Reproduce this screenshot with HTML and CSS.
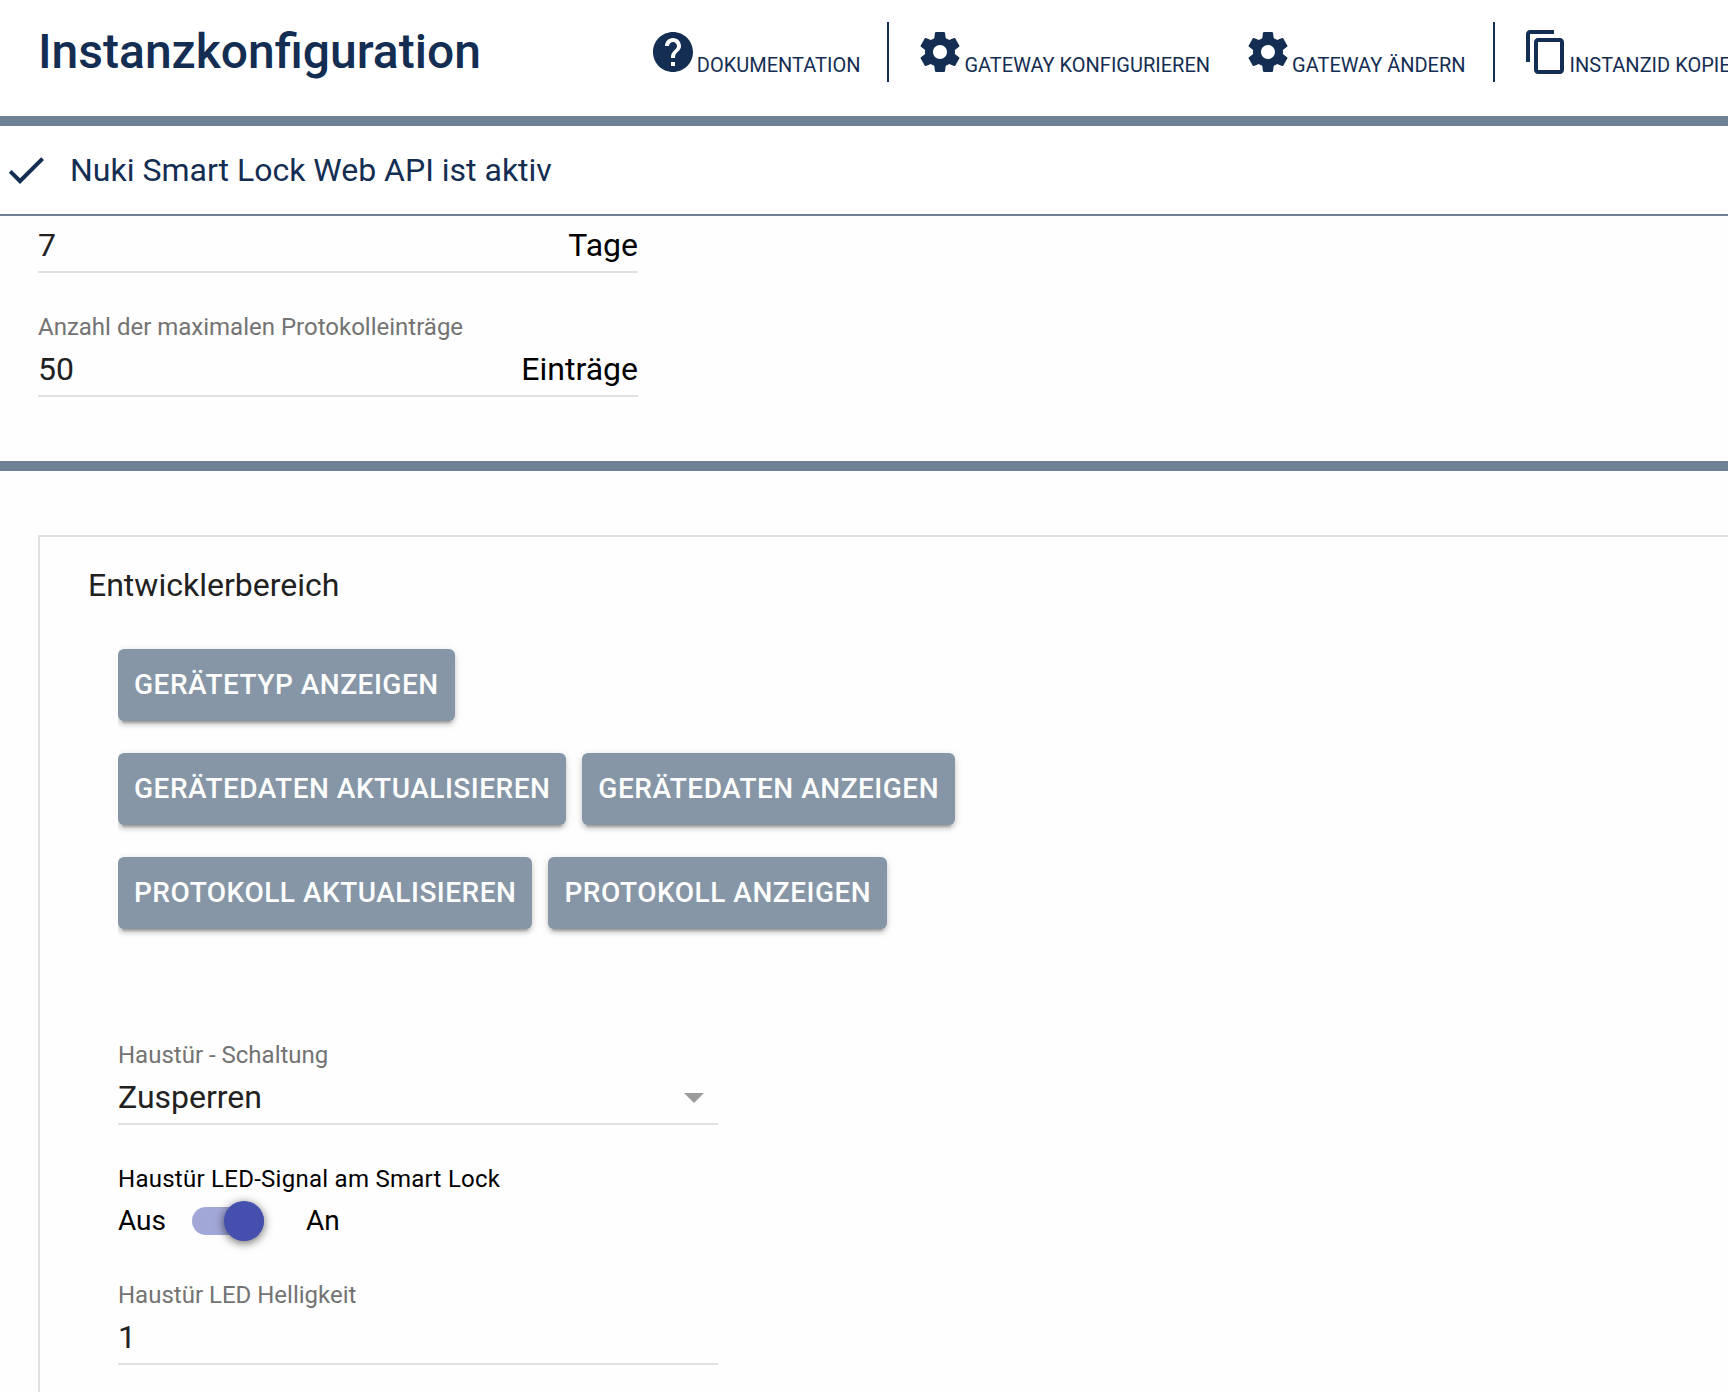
FILE: index.html
```html
<!DOCTYPE html>
<html lang="de">
<head>
  <meta charset="UTF-8">
  <meta name="viewport" content="width=device-width, initial-scale=1.0">
  <title>Instanzkonfiguration</title>
  <link rel="stylesheet" href="styles.css">
</head>
<body>
  <svg class="sprite" aria-hidden="true">
    <symbol id="icon-help" viewBox="0 0 24 24">
      <path d="M12 2C6.48 2 2 6.48 2 12s4.480 10 10 10 10-4.480 10-10S17.520 2 12 2zm1 17h-2v-2h2v2zm2.070-7.750l-.9.920C13.450 12.900 13 13.500 13 15h-2v-.5c0-1.100.450-2.100 1.170-2.830l1.240-1.260c.370-.360.590-.860.590-1.410 0-1.100-.9-2-2-2s-2 .9-2 2H8c0-2.210 1.790-4 4-4s4 1.790 4 4c0 .880-.360 1.680-.930 2.250z"/>
    </symbol>
    <symbol id="icon-settings" viewBox="0 0 24 24">
      <path d="M19.430 12.980c.040-.320.070-.640.070-.980s-.030-.660-.070-.980l2.110-1.650c.190-.150.240-.420.120-.640l-2-3.460c-.120-.220-.390-.3-.610-.220l-2.490 1c-.520-.4-1.080-.730-1.690-.980l-.380-2.650C14.460 2.180 14.250 2 14 2h-4c-.250 0-.460.180-.490.420l-.380 2.650c-.610.250-1.170.590-1.690.980l-2.490-1c-.230-.090-.490 0-.610.220l-2 3.460c-.130.220-.070.490.120.640l2.110 1.650c-.040.320-.070.650-.070.980s.030.660.070.980l-2.110 1.650c-.190.150-.240.420-.120.640l2 3.460c.120.220.390.3.610.220l2.490-1c.520.4 1.080.730 1.690.980l.380 2.650c.030.240.240.420.490.420h4c.250 0 .460-.180.490-.420l.380-2.650c.610-.250 1.170-.590 1.690-.980l2.490 1c.230.090.490 0 .610-.220l2-3.460c.120-.220.070-.490-.120-.640l-2.110-1.650zM12 15.500c-1.930 0-3.500-1.570-3.500-3.500s1.570-3.500 3.500-3.500 3.500 1.570 3.500 3.500-1.570 3.500-3.500 3.500z"/>
    </symbol>
    <symbol id="icon-copy" viewBox="0 0 24 24">
      <path d="M16 1H4c-1.100 0-2 .9-2 2v14h2V3h12V1zm3 4H8c-1.100 0-2 .9-2 2v14c0 1.100.9 2 2 2h11c1.100 0 2-.9 2-2V7c0-1.100-.9-2-2-2zm0 16H8V7h11v14z"/>
    </symbol>
    <symbol id="icon-check" viewBox="0 0 24 24">
      <path d="M9 16.170L4.830 12l-1.420 1.410L9 19 21 7l-1.410-1.410z"/>
    </symbol>
  </svg>

  <header class="header">
    <h1 class="title">Instanzkonfiguration</h1>
    <nav class="toolbar">
      <button type="button" class="tool"><svg class="icon"><use href="#icon-help"/></svg>Dokumentation</button>
      <span class="divider"></span>
      <button type="button" class="tool"><svg class="icon"><use href="#icon-settings"/></svg>Gateway konfigurieren</button>
      <button type="button" class="tool"><svg class="icon"><use href="#icon-settings"/></svg>Gateway ändern</button>
      <span class="divider"></span>
      <button type="button" class="tool"><svg class="icon"><use href="#icon-copy"/></svg>InstanzID kopieren</button>
    </nav>
  </header>

  <div class="status">
    <svg class="icon"><use href="#icon-check"/></svg>
    <span>Nuki Smart Lock Web API ist aktiv</span>
  </div>

  <section class="protokoll">
    <div class="field">
      <div class="field-row">
        <input type="text" id="tage" value="7">
        <label class="suffix" for="tage">Tage</label>
      </div>
    </div>
    <div class="field">
      <label class="field-label" for="eintraege">Anzahl der maximalen Protokolleinträge</label>
      <div class="field-row">
        <input type="text" id="eintraege" value="50">
        <span class="suffix">Einträge</span>
      </div>
    </div>
  </section>

  <main class="actions">
    <div class="panel">
      <h2 class="panel-title">Entwicklerbereich</h2>
      <div class="panel-body">
        <div class="button-rows">
          <div class="button-row">
            <button type="button" class="btn">Gerätetyp anzeigen</button>
          </div>
          <div class="button-row">
            <button type="button" class="btn">Gerätedaten aktualisieren</button>
            <button type="button" class="btn">Gerätedaten anzeigen</button>
          </div>
          <div class="button-row">
            <button type="button" class="btn">Protokoll aktualisieren</button>
            <button type="button" class="btn">Protokoll anzeigen</button>
          </div>
        </div>

        <div class="field">
          <label class="field-label" for="schaltung">Haustür - Schaltung</label>
          <div class="field-row select-row">
            <select id="schaltung">
              <option>Zusperren</option>
              <option>Aufsperren</option>
            </select>
          </div>
        </div>

        <div class="switch-field">
          <label class="switch-label" for="led">Haustür LED-Signal am Smart Lock</label>
          <div class="switch-row">
            <span>Aus</span>
            <input type="checkbox" class="switch" id="led" checked>
            <span>An</span>
          </div>
        </div>

        <div class="field">
          <label class="field-label" for="helligkeit">Haustür LED Helligkeit</label>
          <div class="field-row">
            <input type="text" id="helligkeit" value="1">
          </div>
        </div>
      </div>
    </div>
  </main>
</body>
</html>
```

FILE: styles.css
```css
* {
  box-sizing: border-box;
}
body {
  margin: 0;
  min-height: 100vh;
  display: flex;
  flex-direction: column;
  overflow: hidden;
  background-color: #fefefe;
  color: #000;
  font-family: Roboto, "Liberation Sans", sans-serif;
  font-size: 32px;
  line-height: 40px;
}
button, input, select {
  font: inherit;
  border: none;
  margin: 0;
  padding: 0;
}
button {
  cursor: pointer;
  text-transform: uppercase;
  white-space: nowrap;
}
.sprite {
  display: none;
}
.icon {
  width: 48px;
  height: 48px;
  flex: none;
  fill: currentColor;
}

/* header */
.header {
  display: flex;
  align-items: center;
  gap: 151px;
  padding: 22px 0 34px 38px;
  border-bottom: 10px solid #6f8195;
  background-color: white;
  color: #142d52;
}
.title {
  margin: 0;
  font-size: 48px;
  font-weight: 500;
  line-height: 60px;
}
.toolbar {
  display: flex;
  align-items: center;
  flex: 1;
}
.tool {
  display: flex;
  align-items: flex-end;
  padding: 0 17px;
  background: none;
  color: inherit;
  font-size: 20px;
  line-height: 22px;
}
.divider {
  flex: none;
  width: 2px;
  height: 60px;
  margin: 0 10px;
  background-color: #142d52;
}
.status {
  display: flex;
  align-items: center;
  gap: 20px;
  padding: 20px 2px;
  border-bottom: 2px solid #6f8195;
  background-color: white;
  color: #142d52;
}

/* fields */
.protokoll {
  padding: 3px 38px 64px;
  border-bottom: 10px solid #6f8195;
}
.field {
  width: 600px;
  max-width: 100%;
}
.field + .field {
  margin-top: 38px;
}
.field-label {
  display: block;
  color: #737373;
  font-size: 24px;
  line-height: 32px;
}
.field-row {
  display: flex;
  padding: 6px 0;
  border-bottom: 2px solid #e0e0e0;
}
.field-row input, .field-row select {
  flex: 1;
  min-width: 0;
  height: 40px;
  background: none;
  color: #212121;
  outline: none;
}
.select-row {
  position: relative;
}
.select-row select {
  appearance: none;
}
.select-row::after {
  content: "";
  position: absolute;
  right: 14px;
  top: 22px;
  border: 10px solid transparent;
  border-top-color: #9b9b9b;
  border-bottom: none;
  pointer-events: none;
}

/* developer panel */
.actions {
  flex: 1;
  display: flex;
  padding: 64px 0 0 38px;
}
.panel {
  flex: 1;
  padding: 28px 48px 26px;
  border: 2px solid #e0e0e0;
  border-width: 2px 0 0 2px;
}
.panel-title {
  margin: 0;
  color: #212121;
  font-size: 32px;
  font-weight: 400;
}
.panel-body {
  padding: 28px 30px 0;
}
.button-rows {
  display: flex;
  flex-direction: column;
  gap: 16px;
  margin-bottom: 94px;
  overflow: hidden;
}
.button-row {
  display: flex;
  gap: 16px;
  padding: 16px 0 0;
}
.button-row:last-child {
  padding-bottom: 16px;
}
.btn {
  height: 72px;
  padding: 0 16px;
  border-radius: 6px;
  background-color: #8696a6;
  color: white;
  font-size: 28px;
  font-weight: 500;
  letter-spacing: 0.018em;
  box-shadow: 0 4px 4px rgba(0, 0, 0, 0.14), 0 2px 10px rgba(0, 0, 0, 0.12), 0 6px 2px -4px rgba(0, 0, 0, 0.2);
}

/* switch */
.switch-field {
  margin: 38px 0 32px;
}
.switch-label {
  display: block;
  font-size: 24px;
  line-height: 32px;
  letter-spacing: 0.011em;
}
.switch-row {
  display: flex;
  align-items: center;
  height: 52px;
  font-size: 28px;
}
.switch {
  appearance: none;
  display: flex;
  align-items: center;
  justify-content: flex-end;
  width: 72px;
  height: 28px;
  margin: 0 42px 0 26px;
  border-radius: 14px;
  background-color: #a1a7d7;
  cursor: pointer;
}
.switch::before {
  content: "";
  width: 40px;
  height: 40px;
  border-radius: 50%;
  background-color: #444fae;
  box-shadow: 0 2px 10px rgba(0, 0, 0, 0.6);
}
.switch:not(:checked) {
  justify-content: flex-start;
}
```
